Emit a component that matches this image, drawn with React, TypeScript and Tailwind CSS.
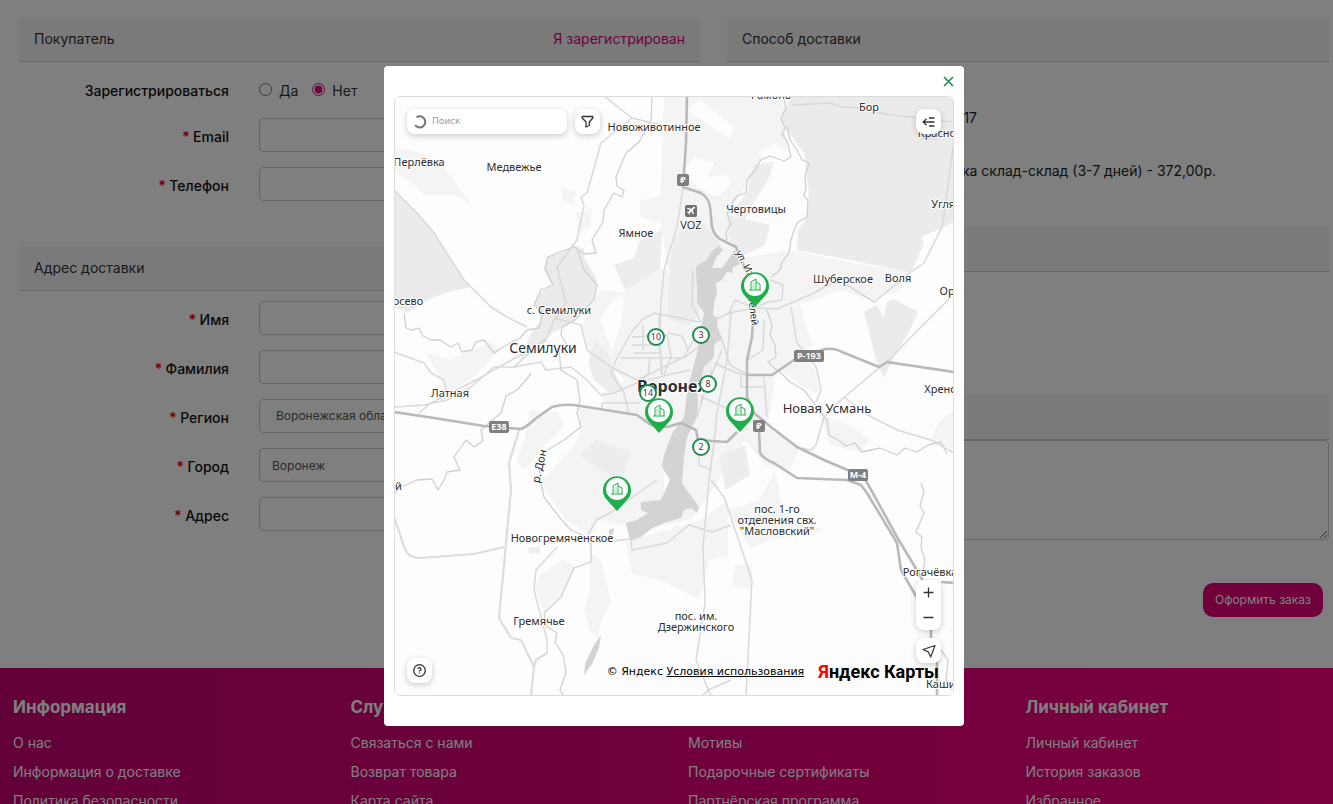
import React from "react";

const PanelTitle = ({
  title,
  children,
}: {
  title: string;
  children?: React.ReactNode;
}) => (
  <div className="flex h-[45px] items-center justify-between border-b border-[#cfcfcf] bg-[#f4f4f4] px-[15px] pb-[2px] text-[14px] text-[#333]">
    <h2>{title}</h2>
    {children}
  </div>
);

const Field = ({
  id,
  label,
  children,
}: {
  id: string;
  label: string;
  children?: React.ReactNode;
}) => (
  <div className="flex items-center gap-[30px]">
    <label htmlFor={id} className="w-[210px] shrink-0 pt-[2px] text-right text-[14px] font-medium">
      <span className="font-bold text-[#f00]">* </span>
      {label}
    </label>
    {children ?? (
      <input id={id} type="text" className="h-[34px] min-w-0 flex-1 rounded border border-[#ccc] px-3 text-[12px]" />
    )}
  </div>
);

const forests = [
  "M394 190 417 213 434 233 464 280 471 287 444 293 424 302 407 313 402 310 394 308Z",
  "M791 96H954V222L944 227 921 237 924 243 911 273 851 260 797 250 798 230 807 217 809 193 804 153 787 130 781 117Z",
  "M547 257 567 250 574 245 584 249 584 257 597 280 593 300 571 324 554 332 535 350 520 360 530 335 541 320 534 303 541 293 552 285 544 270Z",
  "M864 312 877 305 884 318 887 302 894 299 918 312 909 332 896 353 884 378 876 360Z",
];

const districts = [
  "M664 96H786V150L762 158 747 185 730 210 728 240 745 258 790 250 850 262 911 273 900 290 870 300 840 290 800 305 812 345 776 370 768 425 800 447 790 470 765 465 745 440 725 470 706 500 690 520 640 530 600 520 590 535 566 520 545 490 543 480 575 445 582 425 577 408 610 412 600 395 625 380 610 366 590 355 582 325 600 290 625 292 640 268 668 270 660 220Z",
  "M625 542 700 520 728 500 728 556 709 560 699 599 660 580 632 574Z",
  "M394 148 420 152 446 170 472 205 455 195 425 195 408 180 394 172Z",
  "M591 553 601 560 611 603 602 618 598 637 590 632 584 610 590 590Z",
  "M562 188 576 192 574 204 562 200Z",
  "M640 200 665 196 675 212 655 222 640 216Z",
  "M665 140 686 130 684 190 672 175Z",
  "M576 212 592 208 590 228 578 232Z",
  "M530 410 557 412 565 425 545 445 525 470 516 462 525 438Z",
  "M425 352 450 360 490 342 500 350 470 380 448 392Z",
  "M540 575 562 560 575 565 560 596 544 610 535 590Z",
  "M728 510 760 500 775 470 784 520 826 530 770 540 750 548Z",
  "M735 565 752 565 752 590 732 585Z",
  "M820 415 850 425 870 440 860 452 830 445Z",
  "M770 330 800 350 815 370 820 395 800 385 778 368Z",
  "M940 420 954 410V450L930 440Z",
  "M694 96 714 96 735 125 724 138 704 130 688 112Z",
];

const clearings = [
  "M687 110 700 100 734 127 730 138 722 134Z",
  "M684 170 694 157 714 163 707 177 727 175 731 183 717 197 697 187Z",
  "M758 152 775 143 790 155 786 160 764 159Z",
  "M600 320 612 300 624 294 622 320 612 350Z",
  "M664 460 672 448 680 460 678 500 664 505Z",
];

const shades = [
  "M754 165 774 162 768 180 752 205 744 222 732 212 747 192Z",
  "M727 215 770 225 765 245 745 255 729 240Z",
  "M674 240 696 215 722 245 706 262 694 290 668 300 670 262Z",
  "M668 290 694 285 700 312 690 325 668 320Z",
  "M697 350 712 358 712 372 700 380Z",
  "M596 440 630 452 622 480 600 470 580 455Z",
  "M720 455 745 445 750 475 725 490Z",
  "M614 265 634 258 640 240 662 230 660 270 625 290Z",
  "M595 340 606 350 622 390 608 392 594 380 588 362Z",
  "M527 548 540 546 540 553 530 553Z",
];

const water = [
  "M699 264 707 260 711 252 719 246 723 250 716 258 712 268 722 268 728 260 734 250 742 257 740 264 732 268 733 273 727 272 722 280 716 283 717 292 714 303 713 315 718 318 717 327 719 340 714 345 714 357 704 367 701 378 697 387 698 402 697 417 687 437 684 457 682 483 688 492 699 507 697 513 691 508 684 510 681 518 674 520 664 523 651 529 641 537 630 541 626 523 637 520 648 513 641 510 641 502 661 500 670 480 662 467 664 455 667 447 673 432 684 418 686 400 689 383 697 353 701 330 704 313 697 303 697 290 696 267Z",
  "M717 326 722 338 719 342Z",
  "M601 635 599 648 592 664 584 675 585 664 594 645Z",
  "M609 530 614 528 613 534 609 535Z",
];

const rivers = [
  "M784 96 786 108 781 118 785 128 782 134 787 141 791 157 784 161 770 156 761 160 755 170 747 180 746 193 737 196 732 203 727 214 731 224 726 232 727 240",
  "M787 127 790 140 797 150 802 160 809 163 805 176 806 187 804 196 808 200 807 217 798 222 794 230 791 240 789 253 782 262 780 270 771 277",
  "M652 96 651 120 639 142 626 153 616 177 617 186 624 190 622 197 614 193 604 210 603 222 592 240 596 253 584 254 574 247",
  "M404 313 406 328 412 330 419 328 423 336 431 340 440 340 451 347 458 343 462 352 472 350 476 342 484 340 494 353 503 347 520 338 527 330 539 328 543 312 534 305 541 290 553 285 545 268 548 257 560 252 574 247",
  "M531 373 526 380 517 390 506 396 504 403 501 413 490 422 481 430 483 441 474 447 466 440 454 457 460 470 447 472 444 480 438 490 432 479 417 480 401 487 394 494",
  "M767 310 772 325 770 335 775 345 776 357 768 362 774 368 781 373 790 382 804 390 814 403 827 420 829 435 838 440 846 446 855 443 862 452 880 448 897 455 905 448 917 452 928 445 941 442 947 454",
  "M591 543V562L574 568 561 597 544 613 547 627 557 633 555 642 563 655 566 672 560 690 564 696",
  "M577 248 584 270 597 285 594 300 575 320 562 327 561 335 567 345 559 350 561 370 577 380 580 400 577 413 581 427 564 440 544 452 539 465 541 483 544 497 560 518 571 530 587 537 591 545",
  "M921 483 924 492 920 505 924 513 916 532 922 537 921 547 925 560 923 572",
  "M941 650 948 660 946 680 952 690",
];

const minorRoads = [
  "M394 190 417 213 434 233 464 280 474 290 491 307 507 317 527 327",
  "M604 96 632 118 661 125",
  "M632 118 601 143 587 193 581 197 584 205 577 240 557 267 566 303 554 320 547 337 514 367",
  "M683 188 677 227 664 270 661 303 659 350",
  "M792 105 831 103 841 107 864 108 884 114 954 122",
  "M953 147 947 193 942 227 924 263 911 272 874 302 844 283 835 283",
  "M701 327 729 313 754 308 777 309 814 293 837 280",
  "M951 297 921 327 887 362 879 368 841 400 824 417 816 445 811 450 802 448",
  "M844 397 864 413 897 430 931 440 954 453",
  "M394 407 424 405 447 400 471 387 494 367 514 367 541 362 546 370 571 367 587 380 601 395 614 393 637 383",
  "M419 413 431 403 480 378 547 340",
  "M394 352 424 363 431 373 444 380 447 397",
  "M554 318 581 325 587 350 611 367 637 380",
  "M731 313 727 360 717 413 714 443 709 480 703 547 705 603 696 660 711 696",
  "M711 480 724 497 752 580 746 696",
  "M612 541 631 539 632 550 667 543 689 525 712 532 731 525",
  "M587 537 596 520 610 513 657 480",
  "M547 653 547 640 534 590 536 570 557 547",
  "M621 358H684L701 345",
  "M611 373 617 358 631 333 642 320 654 313 700 322",
  "M611 373 624 393 629 413",
  "M602 403H640M602 403V409",
  "M632 337 667 335 671 357 664 375",
  "M637 380 664 367 684 357 699 330",
  "M640 382 664 376 690 370",
  "M714 363 737 373 747 375",
  "M702 327 722 340 730 365 748 375",
  "M693 270 692 305 701 322",
  "M764 320 763 350 748 360",
  "M767 417 764 377M741 375V387H764",
  "M697 417 712 370M700 403 722 350",
  "M699 450V465L712 470",
  "M668 333 682 336 688 350M680 425 684 438",
  "M702 696 708 690 731 680",
  "M632 345H660M634 353H660M643 325V350M650 358 648 375 642 380",
  "M700 396 730 410 748 430",
  "M728 315 735 300 754 308 768 302 782 300 783 285 770 280",
  "M791 307 797 343 816 367 821 390 816 402",
];

const roads = [
  "M519 430 509 463 511 490 499 618 511 638 521 640 534 667 531 696",
  "M534 667 536 660 547 653",
  "M394 517 400 534Q404 550 409 555 414 558 420 558L474 554 504 547",
  "M659 313 660 345 662 375",
];

const highways = [
  "M687 96 686 143 683 187 701 193Q709 198 710 207L712 227Q715 238 724 241L736 247 747 273 754 307 752 337 747 360V397L754 413 771 427 797 447 824 460 864 477 897 537 921 577 931 600V640L937 660V696",
  "M394 412 434 418 484 426 521 429Q528 426 535 419L552 407Q562 404 574 405L637 415 651 425 667 427 681 423 696 430 698 440 727 442 737 432",
  "M747 375H772L794 360 825 349Q835 348 842 352L879 367 887 362 954 372",
  "M759 430 760 453Q765 460 774 463L797 478 847 480 861 485 867 493 897 543 901 570 917 598",
  "M941 582 954 583",
];

const labels = [
  { x: 654, y: 131, text: "Новоживотинное" },
  { x: 514, y: 171, text: "Медвежье" },
  { x: 419, y: 166, text: "Перлёвка" },
  { x: 636, y: 237, text: "Ямное" },
  { x: 771, y: 99, text: "Рамонь" },
  { x: 869, y: 111, text: "Бор" },
  { x: 940, y: 137, text: "Красное" },
  { x: 756, y: 213, text: "Чертовицы" },
  { x: 691, y: 229, text: "VOZ" },
  { x: 953, y: 208, text: "Углянец" },
  { x: 843, y: 283, text: "Шуберское" },
  { x: 898, y: 282, text: "Воля" },
  { x: 960, y: 295, text: "Орлово" },
  { x: 402, y: 305, text: "Гросево" },
  { x: 559, y: 314, text: "с. Семилуки" },
  { x: 450, y: 397, text: "Латная" },
  { x: 950, y: 393, text: "Хреновое" },
  { x: 380, y: 490, text: "Нижний" },
  { x: 562, y: 542, text: "Новогремяченское" },
  { x: 777, y: 513, text: "пос. 1-го" },
  { x: 777, y: 524, text: "отделения свх." },
  { x: 777, y: 535, text: '"Масловский"' },
  { x: 930, y: 576, text: "Рогачёвка" },
  { x: 539, y: 625, text: "Гремячье" },
  { x: 696, y: 620, text: "пос. им." },
  { x: 696, y: 631, text: "Дзержинского" },
  { x: 956, y: 688, text: "Каширское" },
];

const roadSigns = [
  { x: 499, y: 427, width: 20, text: "E38" },
  { x: 809, y: 356, width: 30, text: "Р-193" },
  { x: 858, y: 475, width: 20, text: "М-4" },
  { x: 683, y: 180, width: 12, text: "₽" },
  { x: 759, y: 426, width: 12, text: "₽" },
];

const clusters = [
  { x: 656, y: 337, count: 10 },
  { x: 701, y: 335, count: 3 },
  { x: 708, y: 384, count: 8 },
  { x: 648, y: 393, count: 14 },
  { x: 701, y: 447, count: 2 },
];

const pins = [
  { x: 755, y: 285 },
  { x: 659, y: 411 },
  { x: 740, y: 410 },
  { x: 617, y: 489 },
];

const CityMap = () => (
  <svg
    viewBox="395 97 558 598"
    preserveAspectRatio="xMidYMid slice"
    className="block h-full w-full font-['Noto_Sans',sans-serif]"
    role="img"
    aria-label="Карта пунктов выдачи"
  >
    <rect x="394" y="96" width="560" height="600" fill="#fdfdfd" />
    <path d={districts.join("")} fill="#f4f4f4" />
    <path d={shades.join("")} fill="#ededed" />
    <path d={forests.join("")} fill="#ebebeb" />
    <path d={clearings.join("")} fill="#fdfdfd" />
    <path d={water.join("")} fill="#d3d3d3" />
    <g fill="none" strokeLinejoin="round">
      <path d={rivers.join("")} stroke="#d0d0d0" strokeWidth="1.3" />
      <path d={minorRoads.join("")} stroke="#d9d9d9" strokeWidth="1.5" />
      <path d={roads.join("")} stroke="#dcdcdc" strokeWidth="2.2" />
      <path d={highways.join("")} stroke="#b9b9b9" strokeWidth="2.6" />
    </g>

    <g
      fill="#2e2e2e"
      stroke="#fff"
      strokeWidth="2"
      strokeLinejoin="round"
      paintOrder="stroke"
      textAnchor="middle"
      fontSize="11"
    >
      {labels.map((label) => (
        <text key={label.text} x={label.x} y={label.y}>
          {label.text}
        </text>
      ))}
      <text x="543" y="353" fontSize="14">Семилуки</text>
      <text x="827" y="413" fontSize="13">Новая Усмань</text>
      <text x="674" y="392" fontSize="16" fontWeight="700">Воронеж</text>
      <text transform="translate(543 467) rotate(-77)">р. Дон</text>
      <text transform="translate(742 265) rotate(62)" fontSize="10">ул. Из</text>
      <text transform="translate(750 312) rotate(83)" fontSize="10">телей</text>
    </g>

    {roadSigns.map((sign) => (
      <g key={`${sign.x}-${sign.y}`}>
        <rect x={sign.x - sign.width / 2} y={sign.y - 6} width={sign.width} height="12" rx="2" fill="#808080" />
        <text x={sign.x} y={sign.y + 3} fill="#fff" fontSize="9" fontWeight="700" textAnchor="middle">
          {sign.text}
        </text>
      </g>
    ))}
    <rect x="685" y="205" width="12" height="12" rx="2" fill="#707070" />
    <path
      d="M695 207c-1-.6-1.800 0-2.500.7l-1 1-4-1-.8.800 3.300 1.700-1.500 1.600-1.300-.2-.6.600 1.800.9.900 1.800.6-.6-.2-1.300 1.600-1.500 1.700 3.300.800-.8-1-4 1-1c.7-.7 1.600-1.400 1.200-2Z"
      fill="#fff"
    />

    {clusters.map((cluster) => (
      <g key={cluster.count}>
        <circle cx={cluster.x} cy={cluster.y} r="8" fill="#fff" stroke="#208d50" strokeWidth="2" />
        <text x={cluster.x} y={cluster.y + 3} fill="#4a3040" fontSize="9" textAnchor="middle">
          {cluster.count}
        </text>
      </g>
    ))}

    {pins.map((pin) => (
      <g key={`${pin.x}-${pin.y}`} transform={`translate(${pin.x} ${pin.y})`}>
        <path d="M0 22-10 11A14 14 0 1 1 10 11Z" fill="#1fae4b" />
        <circle r="11" fill="#fff" />
        <path d="M-6 5H6M-4 5V-3L1-6V5M1-3 5-1V5" fill="none" stroke="#1fae4b" strokeWidth="1" />
        <path d="M-2-2V5M0-3V5" stroke="#9ddcaf" strokeWidth="1" />
      </g>
    ))}
  </svg>
);

const mapButton =
  "flex size-[25px] items-center justify-center rounded-lg bg-white text-[#333] shadow-[0_2px_6px_rgba(0,0,0,0.2)]";

const PickupModal = () => (
  <div className="fixed inset-0 z-10 flex items-start justify-center bg-black/50 pt-[66px] pl-[15px]">
    <div role="dialog" aria-modal="true" className="w-[580px] max-w-full rounded bg-white px-[10px] pb-[30px]">
      <div className="flex h-[30px] items-center justify-end">
        <button type="button" aria-label="Закрыть" className="text-[#208d50]">
          <svg width="11" height="11" viewBox="0 0 11 11" stroke="currentColor" strokeWidth="1.600" className="block">
            <path d="M1 1 10 10M10 1 1 10" />
          </svg>
        </button>
      </div>
      <div className="relative h-[600px] overflow-hidden rounded-md border border-[#dcdcdc]">
        <CityMap />

        <div className="absolute top-3 left-3 flex gap-2">
          <label className="flex h-[25px] w-[160px] items-center gap-[5px] rounded-lg bg-white px-[6px] shadow-[0_2px_6px_rgba(0,0,0,0.2)]">
            <svg width="14" height="14" viewBox="0 0 14 14" fill="none" stroke="#757575" strokeWidth="2">
              <path d="M3.500 2.200A5.600 5.600 0 1 1 2.200 10.200" />
            </svg>
            <input
              type="text"
              aria-label="Поиск"
              placeholder="Поиск"
              className="min-w-0 flex-1 font-['DejaVu_Sans',sans-serif] text-[9px] outline-none placeholder:text-[#9a9aab]"
            />
          </label>
          <button type="button" aria-label="Фильтр" className={mapButton}>
            <svg width="13" height="13" viewBox="0 0 13 13" fill="none" stroke="currentColor" strokeWidth="1.3" strokeLinejoin="round">
              <path d="M1.200 1.500H11.800V3L8.300 7V10.500L5 12V7L1.200 3Z" />
            </svg>
          </button>
        </div>

        <div className="absolute top-3 right-3">
          <button type="button" aria-label="Список пунктов" className={mapButton}>
            <svg width="13" height="12" viewBox="0 0 13 12" fill="none" stroke="currentColor" strokeWidth="1.3">
              <path d="M4.500 2.800 1.200 6 4.500 9.200M1.200 6H12.500M7 2H12.500M7 10H12.500" />
            </svg>
          </button>
        </div>

        <div className="absolute right-3 bottom-8 flex flex-col gap-2">
          <div className="flex flex-col rounded-lg bg-white text-[#333] shadow-[0_2px_6px_rgba(0,0,0,0.2)]">
            <button type="button" aria-label="Приблизить" className="flex size-[25px] items-center justify-center">
              <svg width="11" height="11" viewBox="0 0 11 11" stroke="currentColor" strokeWidth="1.3">
                <path d="M5.500 0.500V10.500M0.500 5.500H10.500" />
              </svg>
            </button>
            <button type="button" aria-label="Отдалить" className="flex size-[25px] items-center justify-center">
              <svg width="11" height="11" viewBox="0 0 11 11" stroke="currentColor" strokeWidth="1.3">
                <path d="M0.500 5.500H10.500" />
              </svg>
            </button>
          </div>
          <button type="button" aria-label="Моё местоположение" className={mapButton}>
            <svg width="14" height="14" viewBox="0 0 14 14" fill="none" stroke="currentColor" strokeWidth="1.200" strokeLinejoin="round">
              <path d="M1 5.500 13 1.500 8.700 13 6.300 7.900Z" />
            </svg>
          </button>
        </div>

        <div className="absolute bottom-3 left-3">
          <button type="button" aria-label="Помощь" className={mapButton}>
            <svg width="13" height="13" viewBox="0 0 13 13" fill="none" stroke="currentColor" strokeWidth="1.3">
              <circle cx="6.500" cy="6.500" r="5.800" />
              <path d="M5 5.300A1.500 1.500 0 1 1 7 6.600Q6.500 6.800 6.500 7.400M6.500 8.500V9.600" />
            </svg>
          </button>
        </div>

        <div className="absolute right-[14px] bottom-[11px] flex items-center whitespace-nowrap text-black">
          <span className="font-['DejaVu_Sans',sans-serif] text-[11px]">
            © Яндекс{" "}
            <a href="#terms" className="underline">
              Условия использования
            </a>
          </span>
          <a href="#maps" className="ml-[14px] font-['Roboto',sans-serif] text-[18px] leading-6 font-bold">
            <span className="text-[#f00]">Я</span>ндекс Карты
          </a>
        </div>
      </div>
    </div>
  </div>
);

const footerColumns = [
  { title: "Информация", links: ["О нас", "Информация о доставке", "Политика безопасности"] },
  { title: "Служба поддержки", links: ["Связаться с нами", "Возврат товара", "Карта сайта"] },
  { title: "Дополнительно", links: ["Мотивы", "Подарочные сертификаты", "Партнёрская программа"] },
  { title: "Личный кабинет", links: ["Личный кабинет", "История заказов", "Избранное"] },
];

const App = () => (
  <div className="h-screen overflow-hidden bg-white font-['Inter',sans-serif] text-[14px] text-[#111]">
    <main className="grid min-h-[668px] grid-cols-[681fr_602fr] content-start gap-x-[27px] pt-[17px] pr-1 pl-[19px]">
      <div className="flex flex-col gap-[45px]">
        <section>
          <PanelTitle title="Покупатель">
            <a href="#login" className="text-[#de0078]">
              Я зарегистрирован
            </a>
          </PanelTitle>
          <div className="flex flex-col gap-[15px] pt-[18px]">
            <fieldset className="flex h-[23px] items-center gap-[30px]">
              <legend className="float-left w-[210px] text-right font-medium">Зарегистрироваться</legend>
              <div className="flex gap-[14px] text-[#333]">
                <label className="flex items-center gap-[7px]">
                  <input type="radio" name="register" className="mb-[3px] size-[13px] accent-[#de0078]" />
                  Да
                </label>
                <label className="flex items-center gap-[7px]">
                  <input type="radio" name="register" defaultChecked className="mb-[3px] size-[13px] accent-[#de0078]" />
                  Нет
                </label>
              </div>
            </fieldset>
            <Field id="email" label="Email" />
            <Field id="phone" label="Телефон" />
          </div>
        </section>

        <section>
          <PanelTitle title="Адрес доставки" />
          <div className="flex flex-col gap-[15px] pt-[10px]">
            <Field id="firstname" label="Имя" />
            <Field id="lastname" label="Фамилия" />
            <Field id="region" label="Регион">
              <select
                id="region"
                className="h-[34px] min-w-0 flex-1 appearance-none rounded border border-[#ccc] px-4 text-[12px] text-[#555]"
              >
                <option>Воронежская область</option>
              </select>
            </Field>
            <Field id="city" label="Город">
              <input
                id="city"
                type="text"
                defaultValue="Воронеж"
                className="h-[34px] min-w-0 flex-1 rounded border border-[#ccc] px-3 text-[12px] text-[#555]"
              />
            </Field>
            <Field id="address" label="Адрес" />
          </div>
        </section>
      </div>

      <div className="flex flex-col">
        <section className="h-[210px]">
          <PanelTitle title="Способ доставки" />
          <div className="flex flex-col gap-8 pt-[45px] text-[#222]">
            <p className="w-[250px] text-right">СДЭК, пункт 17</p>
            <p className="w-[489px] text-right">Посылка склад-склад (3-7 дней) - 372,00р.</p>
          </div>
        </section>
        <section className="h-[168px]">
          <PanelTitle title="Способ оплаты" />
        </section>
        <section>
          <PanelTitle title="Комментарий" />
          <textarea
            aria-label="Комментарий"
            className="block h-[100px] w-full rounded border border-[#ccc] p-3"
          />
        </section>
        <div className="flex justify-end pt-[43px] pr-[6px]">
          <button type="button" className="h-[34px] rounded-[10px] bg-[#de0078] px-3 text-[12px] text-white">
            Оформить заказ
          </button>
        </div>
      </div>
    </main>

    <footer className="bg-linear-to-r from-[#c60074] to-[#f60080] pt-[26px] pl-[13px] text-white">
      <div className="-mr-[30px] grid grid-cols-4">
        {footerColumns.map((column) => (
          <nav key={column.title}>
            <h3 className="text-[17px] leading-[26px] font-bold">{column.title}</h3>
            <ul className="pt-2">
              {column.links.map((link) => (
                <li key={link} className="leading-[29px]">
                  <a href="#info">{link}</a>
                </li>
              ))}
            </ul>
          </nav>
        ))}
      </div>
    </footer>

    <PickupModal />
  </div>
);

export default App;
